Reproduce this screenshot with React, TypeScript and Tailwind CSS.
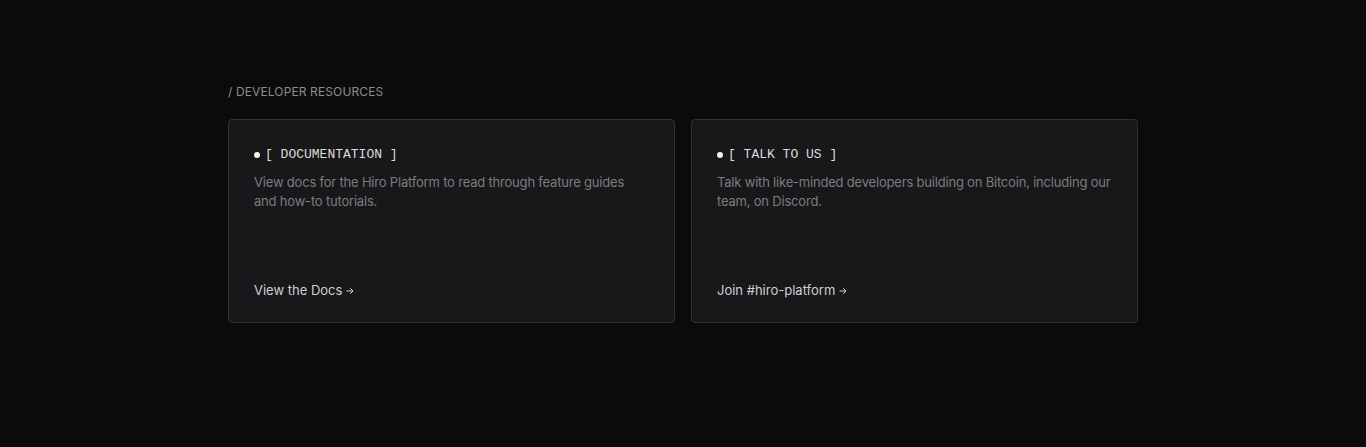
import React from "react";

const cards = [
  {
    title: "DOCUMENTATION",
    body: ["View docs for the Hiro Platform to read through feature guides", "and how-to tutorials."],
    link: "View the Docs",
  },
  {
    title: "TALK TO US",
    body: ["Talk with like-minded developers building on Bitcoin, including our", "team, on Discord."],
    link: "Join #hiro-platform",
  },
];

function Arrow() {
  return (
    <svg width="8" height="8" viewBox="0 0 8 8" fill="none" className="ml-[4px] mt-[1px]">
      <path d="M0.5 4H7M4.2 1.2L7 4L4.2 6.8" stroke="currentColor" strokeWidth="1" />
    </svg>
  );
}

export default function App() {
  return (
    <div className="min-h-[447px] w-full bg-[#0c0b0c] font-['Inter',sans-serif]">
      <div className="mx-auto w-[910px] pt-[84px]">
        <div className="text-[12px] leading-[16px] tracking-[0.01em] text-[#8c8b8d]">
          / DEVELOPER RESOURCES
        </div>
        <div className="mt-[19px] grid grid-cols-2 gap-[16px]">
          {cards.map((c) => (
            <div
              key={c.title}
              className="flex h-[204px] flex-col rounded-[4px] border border-[#302f33] bg-[#18171a] pl-[25px] pr-[18px] pt-[27px] pb-[24px]"
            >
              <div className="flex items-center text-[#dcdcdc]">
                <span className="mr-[5px] h-[6px] w-[6px] rounded-full bg-[#f2f2f2]" />
                <span className="font-['Liberation_Mono',monospace] text-[13px] leading-[16px]">
                  [ {c.title} ]
                </span>
              </div>
              <p className="mt-[10px] text-[13px] leading-[19px] tracking-[-0.015em] text-[#7d7c80]">
                {c.body.map((line) => (
                  <span key={line} className="block whitespace-nowrap">
                    {line}
                  </span>
                ))}
              </p>
              <div className="mt-auto flex items-center text-[13px] leading-[16px] text-[#d0d0d2]">
                {c.link}
                <Arrow />
              </div>
            </div>
          ))}
        </div>
      </div>
    </div>
  );
}
